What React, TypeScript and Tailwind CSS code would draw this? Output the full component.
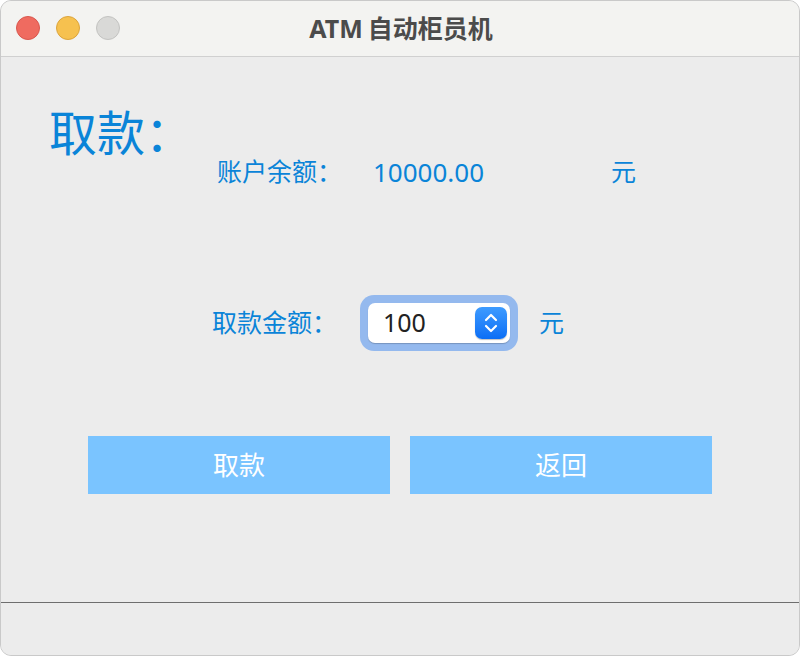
import React from 'react'

const font = { fontFamily: '"Noto Sans", "Noto Sans CJK SC", sans-serif' }

function Stepper() {
  return (
    <div className="flex h-[32px] w-[32px] items-center justify-center rounded-[7px] bg-gradient-to-b from-[#3d9bff] to-[#0a6ef5] shadow-[0_1px_1px_rgba(0,0,0,0.25)]">
      <svg width="18" height="24" viewBox="0 0 18 24" fill="none" stroke="white" strokeWidth="2.2" strokeLinecap="round" strokeLinejoin="round">
        <path d="M4 9 9 4 14 9" />
        <path d="M4 15 9 20 14 15" />
      </svg>
    </div>
  )
}

export default function App() {
  return (
    <div className="h-[656px] w-[800px] bg-white" style={font}>
      <div className="flex h-full w-full flex-col overflow-hidden rounded-[11px] border border-[#c9c9c9] bg-[#ececec]">
        {/* Title bar */}
        <div className="relative flex h-[56px] shrink-0 items-center justify-center border-b border-[#d0d0d0] bg-[#f3f3f1]">
          <div className="absolute left-[15px] top-[15px] flex gap-[16px]">
            <span className="h-[24px] w-[24px] rounded-full border border-[#d9574e] bg-[#ef6b60]" />
            <span className="h-[24px] w-[24px] rounded-full border border-[#dca43c] bg-[#f6c14f]" />
            <span className="h-[24px] w-[24px] rounded-full border border-[#c3c3c1] bg-[#d9d9d7]" />
          </div>
          <span className="pl-[2px] text-[25px] font-bold text-[#4b4b4b]">
            <span className="mr-[5px]">ATM</span>自动柜员机
          </span>
        </div>

        {/* Content */}
        <div className="flex flex-1 flex-col text-[#0a84d8]">
          <div className="pl-[48px] pt-[52px] text-[48px] leading-[48px]">取款：</div>

          <div className="flex h-[30px] items-center pl-[216px] text-[25px]">
            <span className="w-[156px]">账户余额：</span>
            <span className="w-[238px] text-[26px]">10000.00</span>
            <span>元</span>
          </div>

          <div className="mt-[108px] flex items-center pl-[211px] text-[25px]">
            <span className="w-[148px]">取款金额：</span>
            <div className="flex h-[56px] w-[158px] items-center rounded-[14px] bg-[#94b9ee] p-[8px]">
              <div className="flex h-full w-full items-center justify-between rounded-[7px] bg-white pl-[15px] pr-[3px] shadow-[0_1px_1px_rgba(0,0,0,0.2)]">
                <span className="text-[25px] text-[#222222]">100</span>
                <Stepper />
              </div>
            </div>
            <span className="ml-[21px]">元</span>
          </div>

          <div className="mt-[85px] flex gap-[20px] pl-[87px]">
            <button className="flex h-[58px] w-[302px] items-center justify-center bg-[#7ac4ff] text-[26px] text-white">取款</button>
            <button className="flex h-[58px] w-[302px] items-center justify-center bg-[#7ac4ff] text-[26px] text-white">返回</button>
          </div>
        </div>

        {/* Footer */}
        <div className="h-[53px] shrink-0 border-t border-[#6e6e6e] bg-[#ececec]" />
      </div>
    </div>
  )
}
